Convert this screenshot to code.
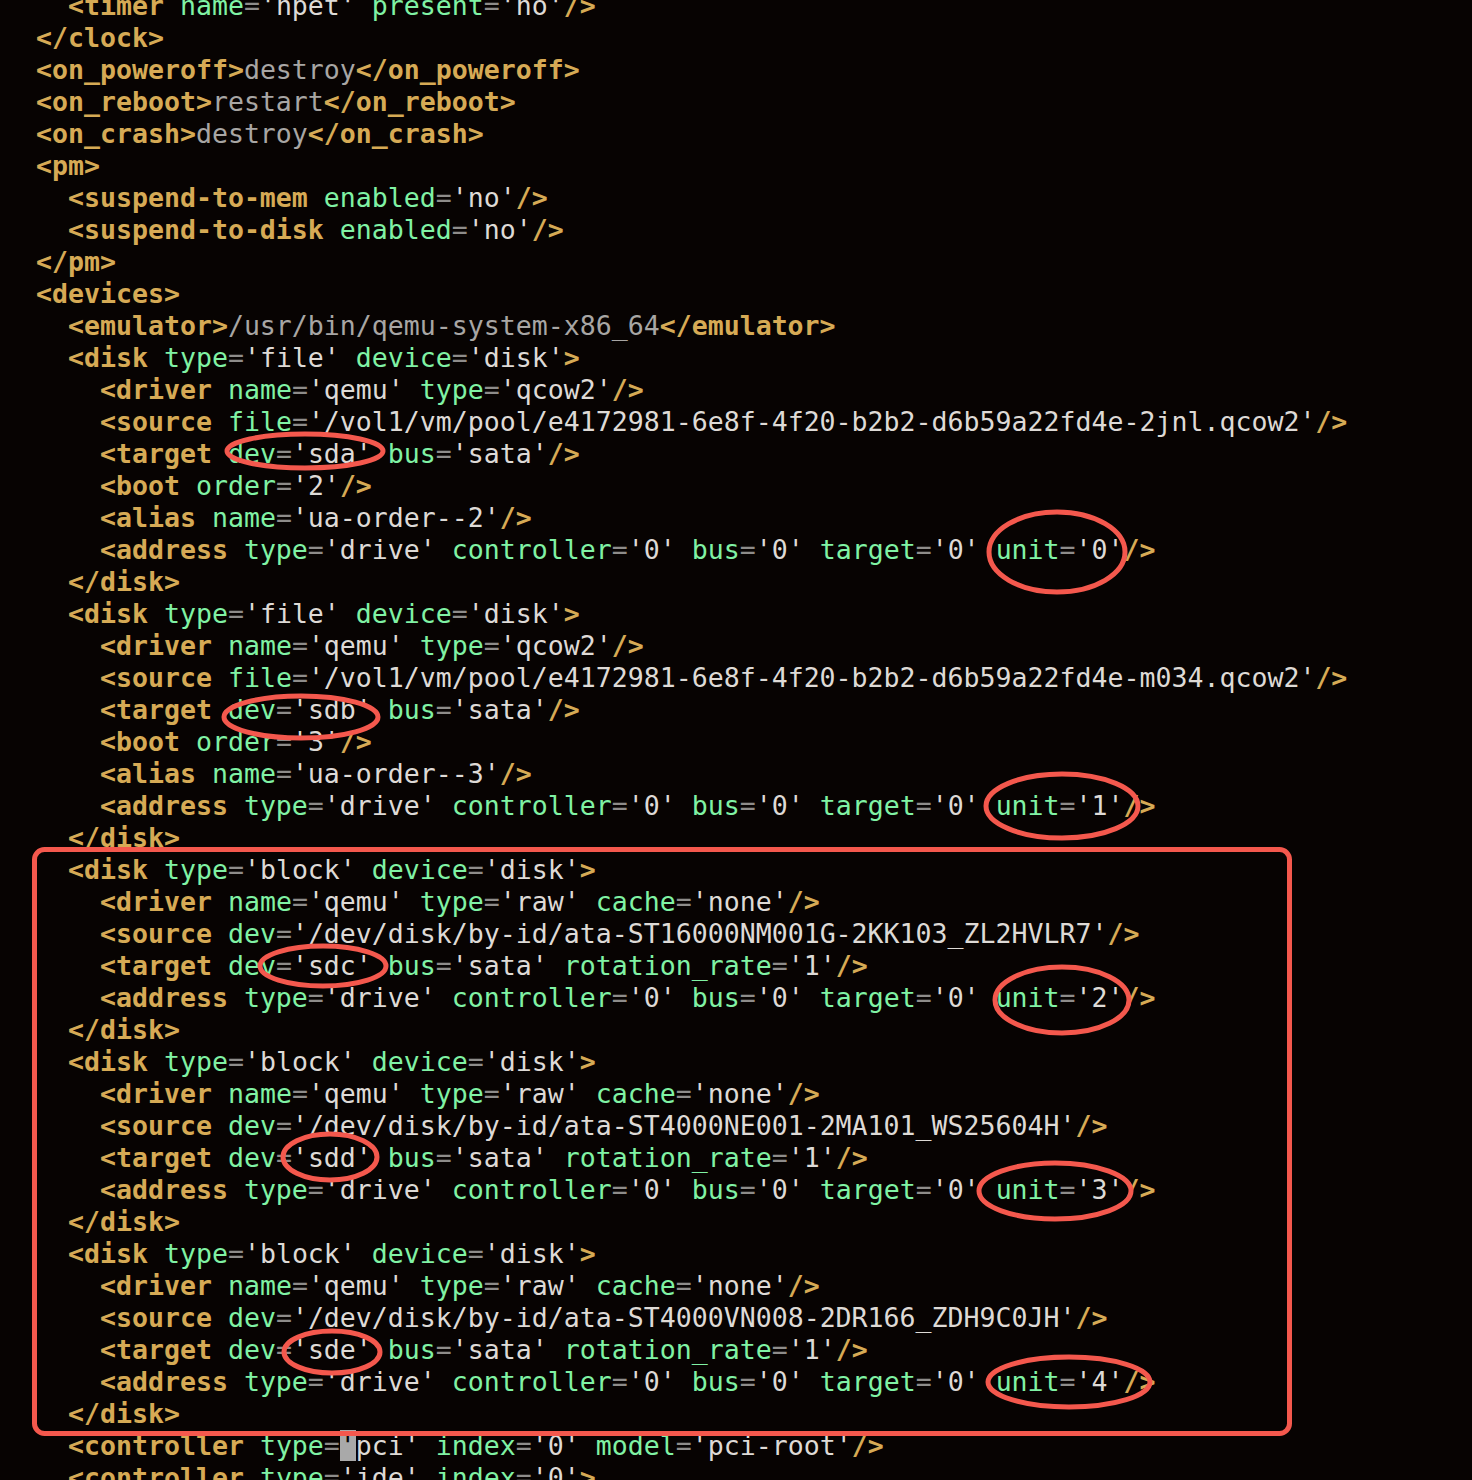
import React from "react"

type Kind = "ws" | "tag" | "attr" | "eq" | "val" | "text" | "cursor"

const lines = [
  "    <timer name='hpet' present='no'/>",
  "  </clock>",
  "  <on_poweroff>destroy</on_poweroff>",
  "  <on_reboot>restart</on_reboot>",
  "  <on_crash>destroy</on_crash>",
  "  <pm>",
  "    <suspend-to-mem enabled='no'/>",
  "    <suspend-to-disk enabled='no'/>",
  "  </pm>",
  "  <devices>",
  "    <emulator>/usr/bin/qemu-system-x86_64</emulator>",
  "    <disk type='file' device='disk'>",
  "      <driver name='qemu' type='qcow2'/>",
  "      <source file='/vol1/vm/pool/e4172981-6e8f-4f20-b2b2-d6b59a22fd4e-2jnl.qcow2'/>",
  "      <target dev='sda' bus='sata'/>",
  "      <boot order='2'/>",
  "      <alias name='ua-order--2'/>",
  "      <address type='drive' controller='0' bus='0' target='0' unit='0'/>",
  "    </disk>",
  "    <disk type='file' device='disk'>",
  "      <driver name='qemu' type='qcow2'/>",
  "      <source file='/vol1/vm/pool/e4172981-6e8f-4f20-b2b2-d6b59a22fd4e-m034.qcow2'/>",
  "      <target dev='sdb' bus='sata'/>",
  "      <boot order='3'/>",
  "      <alias name='ua-order--3'/>",
  "      <address type='drive' controller='0' bus='0' target='0' unit='1'/>",
  "    </disk>",
  "    <disk type='block' device='disk'>",
  "      <driver name='qemu' type='raw' cache='none'/>",
  "      <source dev='/dev/disk/by-id/ata-ST16000NM001G-2KK103_ZL2HVLR7'/>",
  "      <target dev='sdc' bus='sata' rotation_rate='1'/>",
  "      <address type='drive' controller='0' bus='0' target='0' unit='2'/>",
  "    </disk>",
  "    <disk type='block' device='disk'>",
  "      <driver name='qemu' type='raw' cache='none'/>",
  "      <source dev='/dev/disk/by-id/ata-ST4000NE001-2MA101_WS25604H'/>",
  "      <target dev='sdd' bus='sata' rotation_rate='1'/>",
  "      <address type='drive' controller='0' bus='0' target='0' unit='3'/>",
  "    </disk>",
  "    <disk type='block' device='disk'>",
  "      <driver name='qemu' type='raw' cache='none'/>",
  "      <source dev='/dev/disk/by-id/ata-ST4000VN008-2DR166_ZDH9C0JH'/>",
  "      <target dev='sde' bus='sata' rotation_rate='1'/>",
  "      <address type='drive' controller='0' bus='0' target='0' unit='4'/>",
  "    </disk>",
  "    <controller type='pci' index='0' model='pci-root'/>",
  "    <controller type='ide' index='0'>",
]

// line 45, on the quote before pci
const cursorLine = 45
const cursorCol = 21

const kindClass: Record<Kind, string> = {
  ws: "",
  tag: "font-bold text-[#d6aa55]",
  attr: "text-[#80f2a4]",
  eq: "text-[#8e8c8a]",
  val: "text-[#dedad6]",
  text: "text-[#a8a6a4]",
  cursor: "bg-[#a9a9a9] text-[#070302]",
}

const classify = (line: string): Kind[] => {
  const kinds: Kind[] = []
  let i = 0
  let inTag = false
  const push = (len: number, k: Kind) => {
    for (let n = 0; n < len; n++) kinds.push(k)
    i += len
  }
  while (i < line.length) {
    const rest = line.slice(i)
    let m: RegExpMatchArray | null
    if (inTag) {
      if ((m = rest.match(/^\s+/))) push(m[0].length, "ws")
      else if ((m = rest.match(/^\/?>/))) {
        push(m[0].length, "tag")
        inTag = false
      } else if ((m = rest.match(/^[\w-]+/))) push(m[0].length, "attr")
      else if (rest[0] === "=") push(1, "eq")
      else if ((m = rest.match(/^'[^']*'/))) push(m[0].length, "val")
      else push(1, "text")
    } else {
      if ((m = rest.match(/^<\/?[\w-]+/))) {
        push(m[0].length, "tag")
        inTag = true
      } else if ((m = rest.match(/^\s+/))) push(m[0].length, "ws")
      else if ((m = rest.match(/^[^<]+/))) push(m[0].length, "text")
      else push(1, "text")
    }
  }
  return kinds
}

const CodeLine = ({ line, idx }: { line: string; idx: number }) => {
  const kinds = classify(line)
  if (idx === cursorLine) kinds[cursorCol] = "cursor"
  const parts: { k: Kind; s: string }[] = []
  kinds.forEach((k, c) => {
    const last = parts[parts.length - 1]
    if (last && last.k === k) last.s += line[c]
    else parts.push({ k, s: line[c] })
  })
  return (
    <div className="h-[32px] whitespace-pre">
      {parts.map((p, n) => (
        <span key={n} className={kindClass[p.k]}>
          {p.s}
        </span>
      ))}
    </div>
  )
}

const marks = [
  { cx: 305, cy: 451, rx: 78, ry: 17 },
  { cx: 1057, cy: 552, rx: 68, ry: 40 },
  { cx: 301, cy: 717, rx: 77, ry: 21 },
  { cx: 1062, cy: 806, rx: 76, ry: 32 },
  { cx: 323, cy: 966, rx: 63, ry: 20 },
  { cx: 1062, cy: 1000, rx: 67, ry: 33 },
  { cx: 330, cy: 1157, rx: 47, ry: 23 },
  { cx: 1055, cy: 1191, rx: 76, ry: 28 },
  { cx: 332, cy: 1352, rx: 48, ry: 21 },
  { cx: 1069, cy: 1382, rx: 81, ry: 25 },
]

const App = () => {
  return (
    <div className="relative h-[1480px] w-[1472px] overflow-hidden bg-[#070302]">
      <div
        className="-mt-[10px] pl-[4px] text-[26.57px] leading-[32px]"
        style={{ fontFamily: '"DejaVu Sans Mono", "Liberation Mono", monospace' }}
      >
        {lines.map((line, idx) => (
          <CodeLine key={idx} line={line} idx={idx} />
        ))}
      </div>

      {/* red annotations drawn over the code */}
      <svg
        className="pointer-events-none absolute left-0 top-0"
        width={1472}
        height={1480}
        fill="none"
        stroke="#f4584d"
        strokeWidth={5}
      >
        <rect x={34.5} y={849.5} width={1255} height={584} rx={10} />
        {marks.map((m, n) => (
          <ellipse key={n} cx={m.cx} cy={m.cy} rx={m.rx} ry={m.ry} />
        ))}
      </svg>
    </div>
  )
}

export default App
